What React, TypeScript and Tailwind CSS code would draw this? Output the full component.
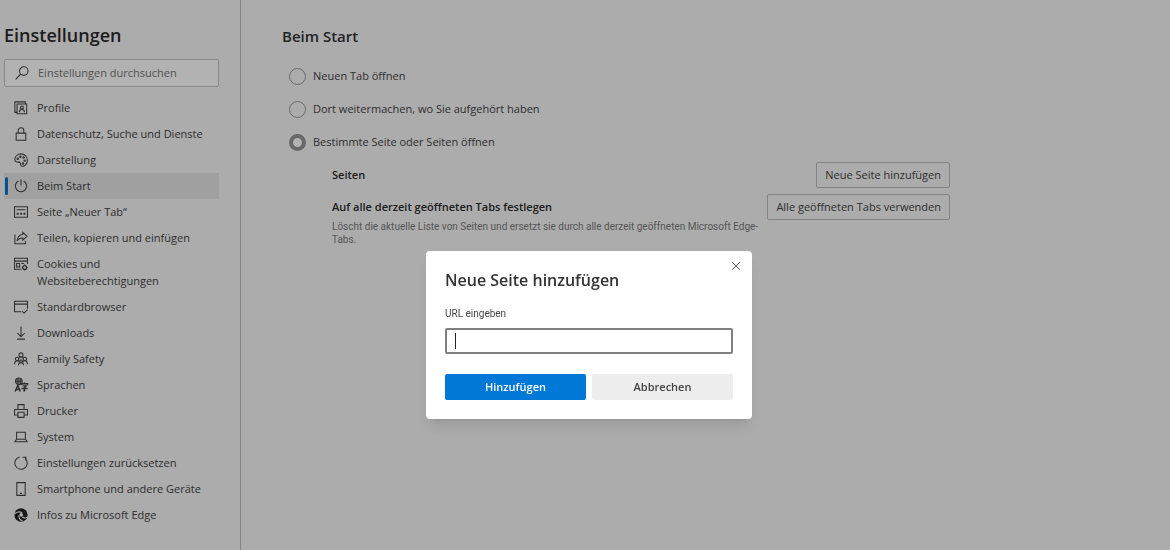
import { useState } from "react"
import type { ReactNode } from "react"
import clsx from "clsx"

type NavItem = {
  label: string
  icon: ReactNode
}

function Icon({ children }: { children: ReactNode }) {
  return (
    <svg
      viewBox="0 0 16 16"
      className="w-[14px] h-[14px] mt-[2px] shrink-0 overflow-visible"
      fill="none"
      stroke="currentColor"
      strokeWidth="1.2"
      aria-hidden="true"
    >
      {children}
    </svg>
  )
}

const navItems: NavItem[] = [
  {
    label: "Profile",
    icon: (
      <Icon>
        <path d="M3.5 3.5h11v11h-11zM3 13H1V1h12v2" />
        <circle cx="9" cy="7.3" r="1.7" />
        <path d="M6 12.8c.2-4.6 5.8-4.6 6 0" />
      </Icon>
    ),
  },
  {
    label: "Datenschutz, Suche und Dienste",
    icon: (
      <Icon>
        <path d="M2.5 7h11v8.2h-11zM4.8 7V4a3.2 3.2 0 0 1 6.4 0v3" />
      </Icon>
    ),
  },
  {
    label: "Darstellung",
    icon: (
      <Icon>
        <path d="M1 6.8C1.4 3.4 4.5 1 8 1c4.2 0 7.3 3.2 7.3 7.2S12.5 15.2 9.5 15.2c-2.6 0-1.8-2.2-2.2-3.6-.5-1.7-2.3-1-3.7-1.2C1.6 10.2.8 8.5 1 6.8z" />
        <circle cx="4.3" cy="6.5" r=".8" />
        <circle cx="7.3" cy="4.2" r=".8" />
        <circle cx="11" cy="5.2" r=".8" />
        <circle cx="12.2" cy="8.7" r=".8" />
        <circle cx="10.3" cy="12" r=".8" />
      </Icon>
    ),
  },
  {
    label: "Beim Start",
    icon: (
      <Icon>
        <path d="M8 .5v7M5 2.3a6.5 6.5 0 1 0 6 0" />
      </Icon>
    ),
  },
  {
    label: "Seite „Neuer Tab“",
    icon: (
      <Icon>
        <path d="M.6 2h14.8v12H.6zM3 5.5h10" />
        <path d="M3 10h2.2M6.9 10h2.2M10.8 10H13" strokeWidth="2.2" />
      </Icon>
    ),
  },
  {
    label: "Teilen, kopieren und einfügen",
    icon: (
      <Icon>
        <path d="M1 4v10.5h12V11" />
        <path d="M10 1.5l5 4.500-5 4.500V8C7 8 5 9 3.5 11.5 4 7 6.5 4.2 10 4z" />
      </Icon>
    ),
  },
  {
    label: "Cookies und Websiteberechtigungen",
    icon: (
      <Icon>
        <path d="M8.5 14H.6V1.5h14.8V8M.6 4.7h14.8" />
        <path d="M3 7.5h3.5v3.8H3zM8.5 7.5h3" />
        <circle cx="12.2" cy="12" r="2.2" strokeWidth="1.5" />
        <path d="M12.2 8.7v1.1M12.2 14.2v1.2M8.9 12H10M14.4 12h1.2" strokeWidth="1.3" />
      </Icon>
    ),
  },
  {
    label: "Standardbrowser",
    icon: (
      <Icon>
        <path d="M8.5 13.5H.6v-12h14.8V10M.6 4.7h14.8M9.5 13l2 2 4-4" />
      </Icon>
    ),
  },
  {
    label: "Downloads",
    icon: (
      <Icon>
        <path d="M8 .5v11.5M3.8 8L8 12.2 12.2 8M3.5 15h9" />
      </Icon>
    ),
  },
  {
    label: "Family Safety",
    icon: (
      <Icon>
        <circle cx="8" cy="3.3" r="2.3" />
        <circle cx="3.5" cy="8" r="1.9" />
        <circle cx="12.5" cy="8" r="1.9" />
        <circle cx="8" cy="10.5" r="1.5" />
        <path d="M5.2 7.3C6 5.2 10 5.2 10.8 7.3M.6 14c0-5 5.2-5 5.4-2M15.4 14c0-5-5.2-5-5.4-2M5 15.2c.2-4 5.8-4 6 0" />
      </Icon>
    ),
  },
  {
    label: "Sprachen",
    icon: (
      <Icon>
        <circle cx="5.5" cy="3.8" r="3.8" strokeWidth="1.3" />
        <path d="M1.7 3.8h7.6M5.5 0v7.5M3.7 1v6M7.3 1v6" />
        <path d="M1.3 15.5L4.3 8.5l3 7M2.3 13.2h4" strokeWidth="1.7" />
        <path d="M8.8 8V6.5h6.7V8M12 5v1.5M9.8 9h4L12 10.8v3.9h-1.5M8.5 12h7" strokeWidth="1.6" />
      </Icon>
    ),
  },
  {
    label: "Drucker",
    icon: (
      <Icon>
        <path d="M4.5 6.2V.7h7v5.5M4 12.5H.6V6.2h14.8v6.3H12M4.5 9.5h7v5.8h-7z" />
      </Icon>
    ),
  },
  {
    label: "System",
    icon: (
      <Icon>
        <path d="M3 10.5v-8h10v8M3 10.5L1 13.5h14l-2-3z" />
      </Icon>
    ),
  },
  {
    label: "Einstellungen zurücksetzen",
    icon: (
      <Icon>
        <path d="M6.5 1.1A7.1 7.1 0 1 0 12.6 2.6M9.8 1.5h3.8v3.8" />
      </Icon>
    ),
  },
  {
    label: "Smartphone und andere Geräte",
    icon: (
      <Icon>
        <path d="M3.2.7h9.6v14.6H3.2zM6.8 13h2.4" />
      </Icon>
    ),
  },
  {
    label: "Infos zu Microsoft Edge",
    icon: (
      <Icon>
        <circle cx="8" cy="8" r="7.6" fill="#222" stroke="none" />
        <path
          d="M.3 7.3C2 4.3 6.8 3.6 9.2 5.6M5.8 8.5c-.6 3 1.2 5.3 4 6.3M9.5 10.3c1.8 1.4 4.2 1.2 6 .3"
          stroke="#f6f6f6"
          strokeWidth="1.3"
        />
        <circle cx="8.3" cy="7.8" r="2.1" fill="#f6f6f6" stroke="none" />
      </Icon>
    ),
  },
]

const startOptions = [
  "Neuen Tab öffnen",
  "Dort weitermachen, wo Sie aufgehört haben",
  "Bestimmte Seite oder Seiten öffnen",
]

function Sidebar() {
  return (
    <aside className="w-[241px] shrink-0 border-r border-[#bdbdbd] pl-1 pr-[21px]">
      <h1 className="pt-[23px] text-[18px] leading-6 font-semibold text-[#2b2b2b]">Einstellungen</h1>
      <div className="mt-3 flex h-7 items-center gap-[9px] border border-[#c4c4c4] rounded-xs bg-white pl-[10px]">
        <svg viewBox="0 0 16 16" className="w-[14px] h-[14px] shrink-0" fill="none" stroke="#444" strokeWidth="1.2" aria-hidden="true">
          <circle cx="10" cy="5.8" r="4.9" />
          <path d="M6.5 9.4L.7 15.2" />
        </svg>
        <input
          type="search"
          aria-label="Einstellungen durchsuchen"
          placeholder="Einstellungen durchsuchen"
          className="min-w-0 flex-1 bg-transparent outline-none placeholder:text-[#767676]"
        />
      </div>
      <nav className="mt-2">
        <ul>
          {navItems.map(item => {
            const active = item.label === "Beim Start"
            return (
              <li key={item.label}>
                <a
                  href="#"
                  aria-current={active ? "page" : undefined}
                  className={clsx(
                    "relative flex items-start gap-[9px] pl-[10px] pt-1 pb-[5px] leading-[17px]",
                    active && "bg-[#e5e5e5]"
                  )}
                >
                  {active && <span className="absolute left-px top-1 bottom-1 w-[3px] rounded-xs bg-[#0078d4]" />}
                  {item.icon}
                  <span>{item.label}</span>
                </a>
              </li>
            )
          })}
        </ul>
      </nav>
    </aside>
  )
}

function OutlineButton({ children }: { children: ReactNode }) {
  return (
    <button type="button" className="h-[26px] shrink-0 whitespace-nowrap rounded-xs border border-[#bcbcbc] px-2">
      {children}
    </button>
  )
}

function AddPageDialog({ onClose }: { onClose: () => void }) {
  const [url, setUrl] = useState("")

  return (
    <div className="fixed inset-0 flex items-start justify-center bg-black/30 pl-2 pt-[251px]">
      <form
        role="dialog"
        aria-modal="true"
        aria-labelledby="dialog-title"
        onSubmit={e => e.preventDefault()}
        className="relative w-[326px] rounded-sm bg-white px-[19px] pt-[17px] pb-[19px] shadow-lg"
      >
        <button type="button" aria-label="Schließen" onClick={onClose} className="absolute right-3 top-[11px] text-[#555]">
          <svg viewBox="0 0 8 8" className="w-2 h-2" fill="none" stroke="currentColor" strokeWidth="1">
            <path d="M.3.3l7.4 7.4M7.7.3L.3 7.7" />
          </svg>
        </button>
        <h2 id="dialog-title" className="text-[16px] leading-6 font-semibold text-[#333]">
          Neue Seite hinzufügen
        </h2>
        <label htmlFor="url" className="mt-[14px] block font-[Roboto,sans-serif] text-[10px] leading-4 text-[#444]">
          URL eingeben
        </label>
        <div className="relative mt-[6px]">
          <input
            id="url"
            type="text"
            value={url}
            onChange={e => setUrl(e.target.value)}
            className="block h-[26px] w-full rounded-xs border-2 border-[#808080] px-2 caret-transparent outline-none"
          />
          {!url && <span className="pointer-events-none absolute left-[10px] top-[5px] h-4 w-px bg-[#222]" />}
        </div>
        <div className="mt-5 grid grid-cols-2 gap-[6px] font-semibold">
          <button type="submit" className="h-[26px] rounded-xs bg-[#0078d7] text-white">
            Hinzufügen
          </button>
          <button type="button" onClick={onClose} className="h-[26px] rounded-xs bg-[#ededed]">
            Abbrechen
          </button>
        </div>
      </form>
    </div>
  )
}

export default function App() {
  const [selected, setSelected] = useState(2)
  const [dialogOpen, setDialogOpen] = useState(true)

  return (
    <div className="flex min-h-screen bg-[#f6f6f6] font-['Open_Sans','Noto_Sans',sans-serif] text-[11px] text-[#444]">
      <Sidebar />

      <main className="min-w-0 flex-1 pl-[41px] pr-5">
        <div className="max-w-[668px]">
          <h2 className="pt-6 text-[15px] leading-6 font-semibold text-[#333]">Beim Start</h2>
          <div role="radiogroup" aria-label="Beim Start" className="mt-3 pl-[7px]">
            {startOptions.map((option, i) => (
              <label key={option} className="flex h-[33px] items-center gap-[7px]">
                <input
                  type="radio"
                  name="start"
                  checked={selected === i}
                  onChange={() => setSelected(i)}
                  className="h-[17px] w-[17px] appearance-none rounded-full border border-[#989898] checked:border-[4px] checked:border-[#959595] checked:bg-white"
                />
                {option}
              </label>
            ))}
          </div>

          <div className="mt-[3px] flex flex-col gap-[6px] pl-[50px]">
            <div className="flex items-center justify-between">
              <h3 className="font-semibold text-[#2b2b2b]">Seiten</h3>
              <OutlineButton>Neue Seite hinzufügen</OutlineButton>
            </div>
            <div className="flex items-start justify-between gap-2">
              <div className="pt-[5px]">
                <h3 className="leading-4 font-semibold text-[#2b2b2b]">Auf alle derzeit geöffneten Tabs festlegen</h3>
                <p className="mt-[5px] font-[Roboto,sans-serif] text-[10px] leading-[13px] text-[#7c7c7c]">
                  Löscht die aktuelle Liste von Seiten und ersetzt sie durch alle derzeit geöffneten Microsoft Edge-Tabs.
                </p>
              </div>
              <OutlineButton>Alle geöffneten Tabs verwenden</OutlineButton>
            </div>
          </div>
        </div>
      </main>

      {dialogOpen && <AddPageDialog onClose={() => setDialogOpen(false)} />}
    </div>
  )
}
